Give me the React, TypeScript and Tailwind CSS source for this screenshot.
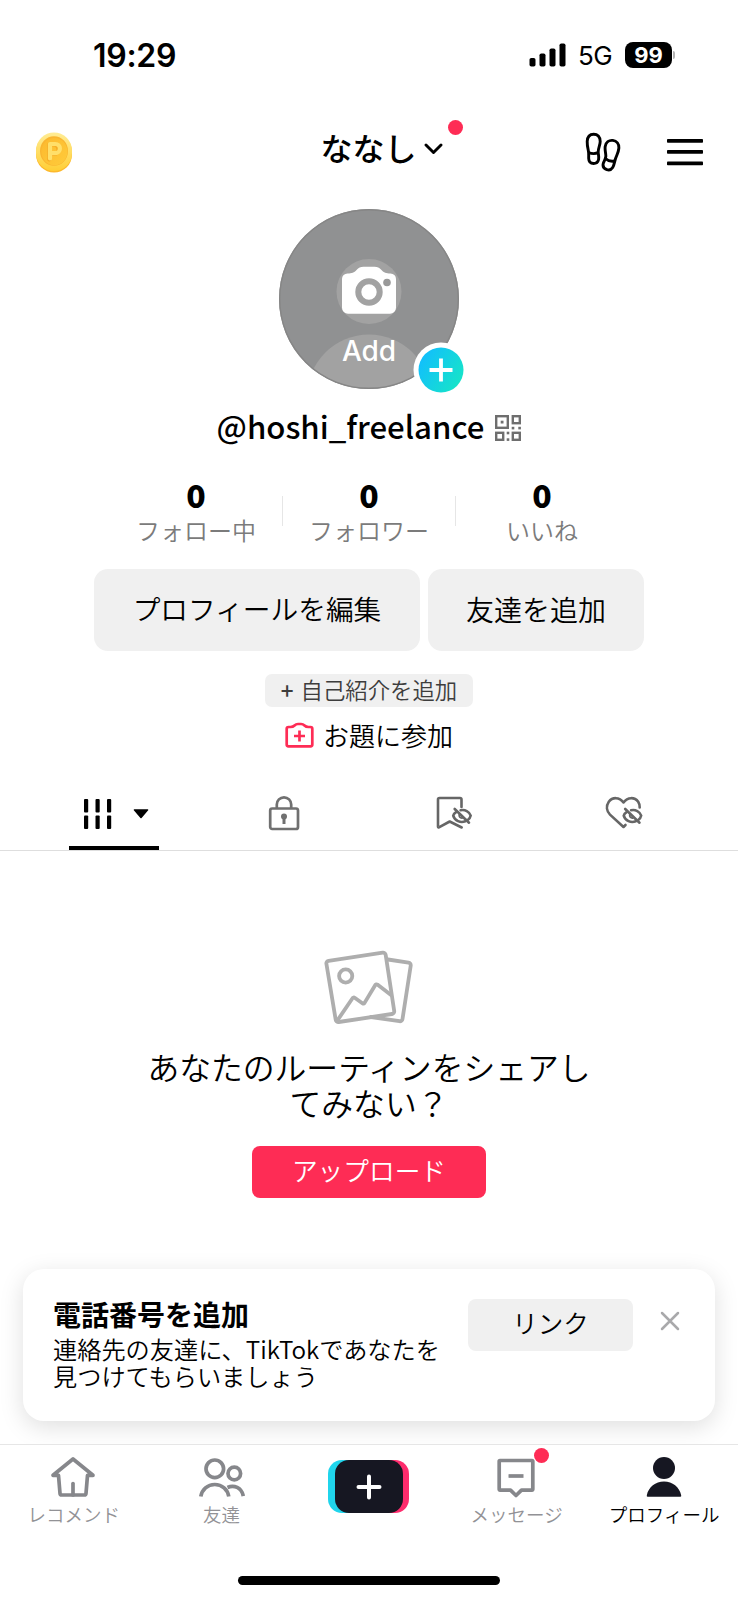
import type { ReactNode } from "react";

function StatusBar() {
  return (
    <div className="flex h-[110px] items-center pr-[63px] pl-[93px]">
      <span className="mt-[2px] font-['Inter',sans-serif] text-[32px] leading-none font-semibold tracking-[-0.3px]">19:29</span>
      <div className="ml-auto flex items-center">
        <svg width="37" height="24" viewBox="0 0 37 24" fill="#000">
          <rect x="0.500" y="15" width="6" height="8.500" rx="1.800" />
          <rect x="10.500" y="10.500" width="6" height="13" rx="1.800" />
          <rect x="20.500" y="5.500" width="6" height="18" rx="1.800" />
          <rect x="30.500" y="0.500" width="6" height="23" rx="1.800" />
        </svg>
        <span className="mt-[2px] ml-[12px] w-[36px] font-['Inter',sans-serif] text-[26px] leading-none tracking-[-0.5px]">5G</span>
        <div className="ml-[11px] flex h-[26px] w-[47px] items-center justify-center rounded-[8px] bg-black font-['Inter',sans-serif] text-[22px] leading-none font-bold text-white">
          99
        </div>
        <div className="ml-[1px] h-[8px] w-[2px] rounded-r-full bg-[#b4b4b4]" />
      </div>
    </div>
  );
}

function Coin() {
  return (
    <svg width="36" height="41" viewBox="0 0 36 41">
      <defs>
        <linearGradient id="rim" x1="0" y1="0" x2="0" y2="1">
          <stop offset="0" stopColor="#ffec94" />
          <stop offset="1" stopColor="#ffce35" />
        </linearGradient>
        <linearGradient id="face" x1="0" y1="0" x2="1" y2="1">
          <stop offset="0" stopColor="#fcb92e" />
          <stop offset="1" stopColor="#ffcb3a" />
        </linearGradient>
      </defs>
      <rect x="0" y="2" width="36" height="38.500" rx="18" fill="#fdb92c" />
      <rect x="0" y="0.500" width="36" height="38.500" rx="18" fill="url(#rim)" />
      <ellipse cx="18" cy="19" rx="14" ry="14.800" fill="#f9b530" />
      <ellipse cx="18.400" cy="19.600" rx="13" ry="13.600" fill="url(#face)" />
      <path d="M13.200 27.500V12.500h5.500a4.900 4.900 0 0 1 0 9.500H14" fill="none" stroke="#f6ab25" strokeWidth="4" strokeLinejoin="round" strokeLinecap="round" />
      <path d="M14 26.500V12h5.300a4.600 4.600 0 0 1 0 9.200H14" fill="none" stroke="#ffdf6a" strokeWidth="4.200" strokeLinejoin="round" strokeLinecap="round" />
    </svg>
  );
}

function Header() {
  return (
    <header className="grid h-[86px] grid-cols-[1fr_auto_1fr] items-center pr-[35px] pb-[2px] pl-[36px]">
      <Coin />
      <div className="relative mb-[10px] ml-[24px] flex items-center">
        <h1 className="text-[32px] leading-[40px] font-medium">ななし</h1>
        <svg className="mt-[4px] ml-[7px]" width="19" height="12" viewBox="0 0 19 12" fill="none" stroke="#000" strokeWidth="2.900" strokeLinecap="round" strokeLinejoin="round">
          <path d="M2 2l7.500 7.500L17 2" />
        </svg>
        <span className="absolute -top-[7px] -right-[20px] size-[15px] rounded-full bg-[#fe2c55]" />
      </div>
      <div className="flex items-center justify-end">
        <svg width="36" height="40" viewBox="0 0 36 40" fill="none" stroke="#000" strokeWidth="2.900" strokeLinejoin="round">
          <path d="M8.700 2.200C12.500 2.200 15.200 4.800 15.200 9.500C15.200 13 13.200 16 13.200 20C13.200 23 14.200 24.500 13.600 27.500C13 30.200 11 31.500 8.600 31.500C5.500 31.500 3.800 29.800 3.700 26.500C3.600 23.500 4 21.500 3.300 18.500C2.600 15.500 2.100 12.500 2.200 9.500C2.400 4.800 5 2.200 8.700 2.200Z" />
          <path d="M3.600 20.500C7 22 10.500 21.800 13.300 20.700" />
          <path d="M27.800 8.400C31.600 8.900 34.200 12.100 33.800 16.500C33.500 20.500 31.500 23.500 30.400 27C29.300 30.300 29.300 33 27.700 35.500C26.300 37.700 24.200 38.400 21.800 37.600C19 36.700 17.600 34.500 18.200 31.700C18.700 29.300 20.500 27.500 20.800 24.500C21.100 21.500 19.600 18.500 20.200 14.500C20.900 10.300 24 7.900 27.800 8.400Z" />
          <path d="M20.300 26.500C22.700 28.700 26.500 29.700 29.700 29" />
        </svg>
        <svg className="ml-[46px]" width="36" height="28" viewBox="0 0 36 28" fill="#000">
          <rect y="1" width="36" height="3.800" rx="0.800" />
          <rect y="12" width="36" height="3.800" rx="0.800" />
          <rect y="23.500" width="36" height="3.800" rx="0.800" />
        </svg>
      </div>
    </header>
  );
}

function Avatar() {
  return (
    <div className="relative mt-[12.500px] size-[180px]">
      <svg width="180" height="180" viewBox="0 0 180 180">
        <defs>
          <clipPath id="disc">
            <circle cx="90" cy="90" r="89.500" />
          </clipPath>
        </defs>
        <circle cx="90" cy="90" r="90" fill="#909192" />
        <g clipPath="url(#disc)" fill="#a2a2a2">
          <circle cx="90" cy="82.500" r="32.500" />
          <circle cx="90" cy="187.500" r="62" />
        </g>
        <circle cx="90" cy="90" r="89.300" fill="none" stroke="#868686" strokeWidth="1.400" />
        <path d="M68.500 64.500c4.500 0 6.500-.8 9-3.500c2.200-2.300 4-3.200 7-3.200h11c3 0 4.800.9 7 3.200c2.500 2.700 4.500 3.500 9 3.500a5.500 5.500 0 0 1 5.500 5.500V98.700a6 6 0 0 1-6 6H69a6 6 0 0 1-6-6V70a5.500 5.500 0 0 1 5.500-5.500z" fill="#fff" />
        <circle cx="90" cy="83" r="10.700" fill="none" stroke="#a2a2a2" strokeWidth="6" />
        <circle cx="108" cy="73.500" r="3.800" fill="#999" />
      </svg>
      <span className="absolute top-[126.500px] left-0 w-full text-center font-['Inter',sans-serif] text-[28px] leading-[32px] font-medium text-white">Add</span>
      <svg className="absolute top-[133.500px] left-[133.500px]" width="56" height="56" viewBox="0 0 56 56">
        <defs>
          <linearGradient id="plus" x1="0" y1="0.200" x2="1" y2="0.800">
            <stop offset="0" stopColor="#12bdff" />
            <stop offset="1" stopColor="#16e6c6" />
          </linearGradient>
        </defs>
        <circle cx="28" cy="28" r="27.500" fill="#fff" />
        <circle cx="28" cy="28" r="22.500" fill="url(#plus)" />
        <path d="M28 16.500v23M16.500 28h23" stroke="#fff" strokeWidth="3.800" />
      </svg>
    </div>
  );
}

function QrIcon() {
  return (
    <svg width="26" height="26" viewBox="0 0 26 26" fill="none" stroke="#6e6e6e" strokeWidth="2.400">
      <rect x="1.200" y="1.200" width="11.600" height="11.600" />
      <rect x="17.800" y="1.200" width="7" height="7" />
      <rect x="1.200" y="17.800" width="7" height="7" />
      <rect x="17.800" y="17.800" width="7" height="7" />
      <g fill="#6e6e6e" stroke="none">
        <rect x="5.700" y="5.700" width="2.800" height="2.800" />
        <rect x="16.700" y="11.800" width="2.600" height="2.600" />
        <rect x="23.300" y="11.800" width="2.600" height="2.600" />
        <rect x="11.700" y="16.700" width="2.600" height="2.600" />
        <rect x="11.700" y="23.300" width="2.600" height="2.600" />
      </g>
    </svg>
  );
}

function Stat({ label }: { label: string }) {
  return (
    <div className="flex w-[172px] flex-col items-center">
      <span className="text-[32px] leading-[32px] font-black">0</span>
      <span className="mt-[6px] text-[24px] leading-[28px] font-[350] text-[#7b7b7b]">{label}</span>
    </div>
  );
}

function Stats() {
  return (
    <div className="mt-[31px] flex h-[67px] justify-center">
      <Stat label="フォロー中" />
      <div className="mt-[18px] h-[30px] w-px bg-[#e6e6e6]" />
      <Stat label="フォロワー" />
      <div className="mt-[18px] h-[30px] w-px bg-[#e6e6e6]" />
      <Stat label="いいね" />
    </div>
  );
}

const hiddenEye = (
  <>
    <path d="M24.600 14.300C29 13.300 33.300 15.600 34.700 19.600C34.300 21.500 33.300 22.900 32 23.800" />
    <path d="M20.400 15.800C18.700 16.800 17.500 18.200 17.200 19.700C18.700 24.800 24.500 27.300 29.300 25.300" />
    <path d="M23.300 18.500C22.800 20.500 24 22 26 22.100" strokeWidth="1.800" />
    <path d="M18.700 13L33 26.700" />
  </>
);

function Tab({ children, active }: { children: ReactNode; active?: boolean }) {
  return (
    <div className="flex w-[170px] flex-col items-center justify-between">
      <div className="flex h-[40px] items-center">{children}</div>
      <div className={active ? "h-[4px] w-[90px] bg-black" : "h-[3px] w-[90px]"} />
    </div>
  );
}

function Tabs() {
  return (
    <div className="mt-[42px] flex h-[58px] justify-center border-b border-[#dedede]">
      <Tab active>
        <svg className="mt-[1px] ml-[5px]" width="28" height="32" viewBox="0 0 28 32" fill="#000">
          <rect x="0" y="1" width="4.200" height="13.500" rx="1" />
          <rect x="11.500" y="1" width="4.200" height="13.500" rx="1" />
          <rect x="23" y="1" width="4.200" height="13.500" rx="1" />
          <rect x="0" y="17.500" width="4.200" height="13.500" rx="1" />
          <rect x="11.500" y="17.500" width="4.200" height="13.500" rx="1" />
          <rect x="23" y="17.500" width="4.200" height="13.500" rx="1" />
        </svg>
        <svg className="mt-[2px] ml-[21px]" width="16" height="10" viewBox="0 0 16 10" fill="#000">
          <path d="M1.200 0.300h13.600a.6.600 0 0 1 .4 1L8.600 9a.8.800 0 0 1-1.200 0L.8 1.300a.6.600 0 0 1 .4-1z" />
        </svg>
      </Tab>
      <Tab>
        <svg width="32" height="36" viewBox="0 0 32 36" fill="none" stroke="#707070" strokeWidth="2.700">
          <rect x="2.200" y="13.500" width="27.800" height="20.500" rx="2" />
          <path d="M8.800 13.500V9.500a7.200 7.200 0 0 1 14.400 0v4" />
          <path d="M16 21v8" strokeWidth="3" />
          <circle cx="16" cy="21.500" r="3" fill="#707070" stroke="none" />
        </svg>
      </Tab>
      <Tab>
        <svg width="36" height="34" viewBox="0 0 36 34" fill="none" stroke="#666" strokeWidth="2.600" strokeLinecap="round" strokeLinejoin="round">
          <path d="M25.500 11V3.500a1.500 1.500 0 0 0-1.500-1.500H3.500A1.500 1.500 0 0 0 2 3.500v27.300a.6.600 0 0 0 .9.500L13.700 25.500l12 6" />
          {hiddenEye}
        </svg>
      </Tab>
      <Tab>
        <svg width="38" height="34" viewBox="0 0 38 34" fill="none" stroke="#666" strokeWidth="2.600" strokeLinecap="round" strokeLinejoin="round">
          <path d="M34.700 11.500a9.600 9.600 0 0 0-1.500-5.700C29.700 1 22.700.7 18.500 6.500C14.300.7 7.300 1 3.800 5.800C.7 10.300 1.700 15.300 5 18.600L18.500 31l2-2" />
          <g transform="translate(1.500 0)">{hiddenEye}</g>
        </svg>
      </Tab>
    </div>
  );
}

function EmptyState() {
  return (
    <section className="mt-[99px] flex flex-col items-center">
      <svg width="90" height="76" viewBox="0 0 90 76" fill="none" stroke="#aeaeae" strokeWidth="3.800" strokeLinecap="round" strokeLinejoin="round">
        <path d="M64 9.500l20.500 3.200a2.600 2.600 0 0 1 2.200 3L78.500 69a2.600 2.600 0 0 1-3 2.200L47 67" />
        <path d="M4.600 10.800L58.700 2.700a2.600 2.600 0 0 1 3 2.200L70.200 61a2.600 2.600 0 0 1-2.200 3L14.700 72a2.600 2.600 0 0 1-3-2.200L2.400 13.800a2.600 2.600 0 0 1 2.200-3z" />
        <circle cx="21.700" cy="26" r="6.600" />
        <path d="M13 71L28.500 48.200a1.500 1.500 0 0 1 2.200-.4l8 5.700a1.200 1.200 0 0 0 1.700-.4L51.300 35.100a1.500 1.500 0 0 1 2.100-.5L67 45" />
      </svg>
      <p className="mt-[22px] text-center text-[31.800px] leading-[36px] font-[350] whitespace-nowrap">
        あなたのルーティンをシェアし
        <br />
        てみない？
      </p>
      <button className="mt-[26px] h-[52px] w-[234px] rounded-[8px] bg-[#fe2c55] pb-[4px] text-[25.700px] leading-none font-[350] text-white">アップロード</button>
    </section>
  );
}

function PhoneCard() {
  return (
    <section className="mx-[23px] mt-[71px] flex h-[152px] rounded-[21px] bg-white pt-[29px] pr-[35px] pl-[30px] shadow-[0_6px_24px_rgba(0,0,0,0.130)]">
      <div>
        <h2 className="text-[28px] leading-[32px] font-bold">電話番号を追加</h2>
        <p className="mt-[5px] text-[24.200px] leading-[27px] font-[350] whitespace-nowrap">
          連絡先の友達に、TikTokであなたを
          <br />
          見つけてもらいましょう
        </p>
      </div>
      <button className="mt-[1px] ml-auto h-[52px] w-[165px] rounded-[8px] bg-[#f0f0f0] pb-[6px] text-[25.500px] leading-none font-[350]">リンク</button>
      <svg className="mt-[13px] ml-[27px]" width="20" height="20" viewBox="0 0 20 20" stroke="#a9a9ab" strokeWidth="2.500" strokeLinecap="round">
        <path d="M2 2l16 16M18 2L2 18" />
      </svg>
    </section>
  );
}

function NavItem({ label, children, active }: { label: string; children: ReactNode; active?: boolean }) {
  return (
    <div className="flex flex-1 flex-col items-center pt-[11px]">
      <div className="relative">{children}</div>
      <span className={active ? "mt-[4px] text-[18.500px] leading-[24px] font-[350] whitespace-nowrap text-black" : "mt-[4px] text-[18.500px] leading-[24px] font-[350] whitespace-nowrap text-[#929296]"}>{label}</span>
    </div>
  );
}

function BottomNav() {
  return (
    <nav className="mt-[23px] flex h-[132px] border-t border-[#e6e6e6] bg-white">
      <NavItem label="レコメンド">
        <svg className="mr-[1px]" width="46" height="42" viewBox="0 0 46 42" fill="none" stroke="#86878b" strokeWidth="3.700" strokeLinejoin="round" strokeLinecap="round">
          <path d="M23 3L3 19.300h5.500l1.500 18a1.800 1.800 0 0 0 1.800 1.700h22.400a1.800 1.800 0 0 0 1.800-1.700l1.500-18H43L23 3z" />
          <path d="M23 27.500V39" />
        </svg>
      </NavItem>
      <NavItem label="友達">
        <svg className="ml-[2px]" width="46" height="42" viewBox="0 0 46 42" fill="none" stroke="#86878b" strokeWidth="3.700">
          <circle cx="15.800" cy="12.800" r="8.800" />
          <circle cx="35.300" cy="17.500" r="6.300" />
          <path d="M1.800 40.500C3 33.500 8.500 28.500 15.800 28.500S28.600 33.500 29.800 40.500" />
          <path d="M28.500 31.500C35 28.500 42.500 31.500 44.300 40" />
        </svg>
      </NavItem>
      <div className="flex flex-1 justify-center pt-[15px]">
        <div className="flex h-[53px] w-[81px] justify-center rounded-[14px] bg-[linear-gradient(90deg,#20d5ec_50%,#fe2c6d_50%)]">
          <div className="flex h-full w-[68px] items-center justify-center rounded-[14px] bg-[#161722]">
            <svg width="26" height="26" viewBox="0 0 26 26" stroke="#fff" strokeWidth="4" strokeLinecap="round">
              <path d="M13 2.500v21M2.500 13h21" />
            </svg>
          </div>
        </div>
      </div>
      <NavItem label="メッセージ">
        <svg className="mr-[1px]" width="38" height="42" viewBox="0 0 38 42" fill="none" stroke="#86878b" strokeWidth="3.700" strokeLinejoin="round">
          <path d="M3 4.500h32a.8.800 0 0 1 .8.800v28a.8.800 0 0 1-.8.800H24.500L19 39.500l-5.500-5.400H3a.8.800 0 0 1-.8-.8v-28a.8.800 0 0 1 .8-.8z" />
          <path d="M11.500 20h15" />
        </svg>
        <span className="absolute -top-[8px] -right-[13px] size-[15px] rounded-full bg-[#fe2c55]" />
      </NavItem>
      <NavItem label="プロフィール" active>
        <svg width="36" height="42" viewBox="0 0 36 42" fill="#161722">
          <circle cx="18" cy="12" r="11" />
          <path d="M18 25.500c8.500 0 15.500 5.500 17.200 13.800a1.200 1.200 0 0 1-1.200 1.500H2a1.200 1.200 0 0 1-1.200-1.500C2.500 31 9.500 25.500 18 25.500z" />
        </svg>
      </NavItem>
    </nav>
  );
}

export default function App() {
  return (
    <div className="flex h-[1600px] w-[738px] flex-col overflow-hidden bg-white font-['Noto_Sans_CJK_JP',sans-serif] text-black">
      <StatusBar />
      <Header />
      <div className="flex flex-col items-center">
        <Avatar />
        <div className="mt-[16.500px] flex h-[42px] items-center">
          <span className="text-[31.200px] leading-[42px] font-medium">@hoshi_freelance</span>
          <span className="mt-[3px] ml-[11px]">
            <QrIcon />
          </span>
        </div>
      </div>
      <Stats />
      <div className="mt-[24px] flex justify-center gap-[8px]">
        <button className="h-[82px] w-[326px] rounded-[14px] bg-[#f0f0f0] pb-[3px] text-[27.700px] leading-none font-[350]">プロフィールを編集</button>
        <button className="h-[82px] w-[216px] rounded-[14px] bg-[#f0f0f0] pb-[3px] text-[28px] leading-none font-[350]">友達を追加</button>
      </div>
      <div className="mt-[23px] flex flex-col items-center">
        <button className="h-[33px] w-[208px] rounded-[7px] bg-[#f0f0f0] pb-[3px] text-[22.400px] leading-none font-[350] text-[#3d3d3d]">
          <span className="mr-[7px] font-medium">+</span>自己紹介を追加
        </button>
        <div className="mt-[12px] flex h-[32px] items-center">
          <svg width="29" height="26" viewBox="0 0 29 26" fill="none" stroke="#fe2c55" strokeWidth="2.700" strokeLinejoin="round">
            <path d="M3.500 5H5.500C7.500 5 8.300 4.700 9.500 3.500C10.600 2.400 11.400 2 13 2h3c1.600 0 2.400.4 3.500 1.500C20.700 4.700 21.500 5 23.500 5h2A1.800 1.800 0 0 1 27.300 6.800V22.500a1.800 1.800 0 0 1-1.800 1.800h-22A1.800 1.800 0 0 1 1.700 22.500V6.800A1.800 1.800 0 0 1 3.500 5z" />
            <path d="M14.500 8.500v11M9 14h11" />
          </svg>
          <span className="ml-[9px] text-[26px] leading-[32px] font-[350]">お題に参加</span>
        </div>
      </div>
      <Tabs />
      <EmptyState />
      <PhoneCard />
      <BottomNav />
      <div className="mx-auto h-[9px] w-[262px] shrink-0 rounded-full bg-black" />
    </div>
  );
}
